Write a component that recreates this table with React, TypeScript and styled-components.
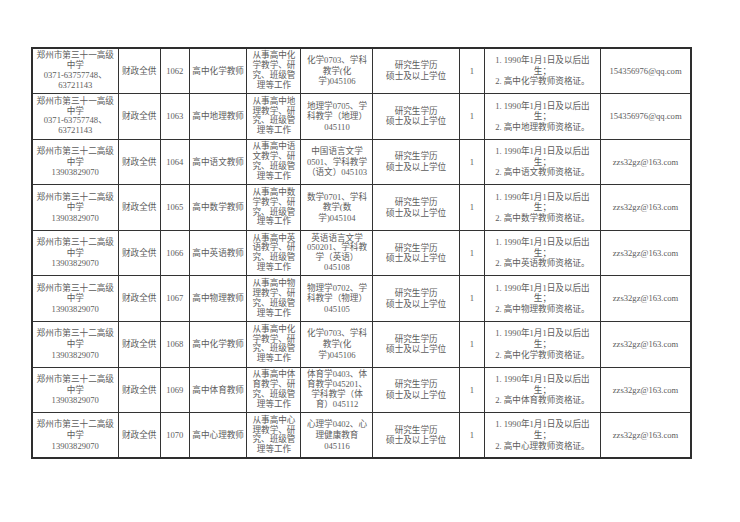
import React from 'react'
import styled, { createGlobalStyle } from 'styled-components'

const Global = createGlobalStyle`
  html, body {
    margin: 0;
    padding: 0;
    background: #fff;
  }
`

const Page = styled.div`
  width: 740px;
  height: 522px;
  box-sizing: border-box;
  padding: 47px 0 0 31px;
  background: #fff;
  display: flex;
  align-items: flex-start;
`

const Sheet = styled.table`
  width: 660px;
  table-layout: fixed;
  border-collapse: collapse;
  border: 2px solid #2e2e2e;
  font-family: "Liberation Serif", "Noto Sans CJK SC", serif;
  font-size: 8.6px;
  color: #5c5c5c;
`

const Col = styled.col<{ $w: number }>`
  width: ${(p) => p.$w}px;
`

const Row = styled.tr`
  height: 45.6px;
`

const Cell = styled.td<{ $tight?: boolean }>`
  border: 1.5px solid #333;
  padding: 0 2px;
  text-align: center;
  vertical-align: middle;
  line-height: ${(p) => (p.$tight ? '9.8px' : '10.6px')};
  white-space: nowrap;
  overflow: hidden;
`

const Lines = ({ lines }: { lines: string[] }) => (
  <>
    {lines.map((l, i) => (
      <React.Fragment key={i}>
        {i > 0 && <br />}
        {l}
      </React.Fragment>
    ))}
  </>
)

type Post = {
  school: string[]
  code: string
  title: string
  duty: string[]
  major: string[]
  subj: string
  email: string
}

const duty = (s: string) => [`从事高中${s[0]}`, `${s[1]}教学、研`, '究、班级管', '理等工作']

const s32 = ['郑州市第三十二高级', '中学', '13903829070']
const s31 = ['郑州市第三十一高级', '中学', '0371-63757748、', '63721143']

const posts: Post[] = [
  { school: s31, code: '1062', title: '高中化学教师', duty: duty('化学'), major: ['化学0703、学科', '教学(化', '学)045106'], subj: '化学', email: '154356976@qq.com' },
  { school: s31, code: '1063', title: '高中地理教师', duty: duty('地理'), major: ['地理学0705、学', '科教学（地理）', '045110'], subj: '地理', email: '154356976@qq.com' },
  { school: s32, code: '1064', title: '高中语文教师', duty: duty('语文'), major: ['中国语言文学', '0501、学科教学', '（语文）045103'], subj: '语文', email: 'zzs32gz@163.com' },
  { school: s32, code: '1065', title: '高中数学教师', duty: duty('数学'), major: ['数学0701、学科', '教学(数', '学)045104'], subj: '数学', email: 'zzs32gz@163.com' },
  { school: s32, code: '1066', title: '高中英语教师', duty: duty('英语'), major: ['英语语言文学', '050201、学科教', '学（英语）', '045108'], subj: '英语', email: 'zzs32gz@163.com' },
  { school: s32, code: '1067', title: '高中物理教师', duty: duty('物理'), major: ['物理学0702、学', '科教学（物理）', '045105'], subj: '物理', email: 'zzs32gz@163.com' },
  { school: s32, code: '1068', title: '高中化学教师', duty: duty('化学'), major: ['化学0703、学科', '教学(化', '学)045106'], subj: '化学', email: 'zzs32gz@163.com' },
  { school: s32, code: '1069', title: '高中体育教师', duty: duty('体育'), major: ['体育学0403、体', '育教学045201、', '学科教学（体', '育）045112'], subj: '体育', email: 'zzs32gz@163.com' },
  { school: s32, code: '1070', title: '高中心理教师', duty: duty('心理'), major: ['心理学0402、心', '理健康教育', '045116'], subj: '心理', email: 'zzs32gz@163.com' },
]

const widths = [86, 42.3, 29, 57.7, 54, 72, 86.3, 25.3, 115.7, 91]

const App = () => (
  <Page>
    <Global />
    <Sheet>
      <colgroup>
        {widths.map((w, i) => (
          <Col key={i} $w={w} />
        ))}
      </colgroup>
      <tbody>
        {posts.map((p) => (
          <Row key={p.code}>
            <Cell $tight={p.school.length > 3}>
              <Lines lines={p.school} />
            </Cell>
            <Cell>财政全供</Cell>
            <Cell>{p.code}</Cell>
            <Cell>{p.title}</Cell>
            <Cell $tight>
              <Lines lines={p.duty} />
            </Cell>
            <Cell $tight={p.major.length > 3}>
              <Lines lines={p.major} />
            </Cell>
            <Cell>
              <Lines lines={['研究生学历', '硕士及以上学位']} />
            </Cell>
            <Cell>1</Cell>
            <Cell>
              <Lines lines={['1. 1990年1月1日及以后出', '生；', `2. 高中${p.subj}教师资格证。`]} />
            </Cell>
            <Cell>{p.email}</Cell>
          </Row>
        ))}
      </tbody>
    </Sheet>
  </Page>
)

export default App
